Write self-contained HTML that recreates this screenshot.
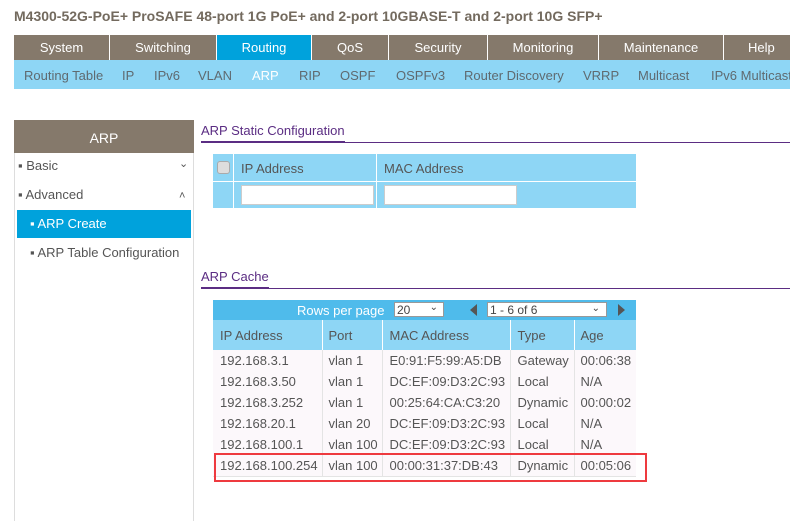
<!DOCTYPE html>
<html style="overflow:hidden"><head><style>
*{margin:0;padding:0;box-sizing:border-box}
body{width:790px;height:521px;overflow:hidden;background:#fff;font-family:"Liberation Sans",sans-serif;color:#555;position:relative}
.abs{position:absolute}
h1{position:absolute;left:14px;top:8px;font-size:14px;font-weight:bold;color:#736a5e;white-space:nowrap}
.nav{position:absolute;top:35px;height:25px;background:#85796b;color:#fff;font-size:13px;text-align:center;line-height:25px;border-right:1px solid #fff}
.sub{position:absolute;top:60px;left:14px;width:776px;height:29px;background:#8ed6f5;font-size:13px;line-height:31px;color:#5f6a70;white-space:nowrap;overflow:hidden}
.sub span{position:absolute}
.lp{position:absolute;left:14px;top:120px;width:180px;height:402px;border:1px solid #ddd;border-top:none;border-bottom:none}
.lph{position:absolute;left:14px;top:120px;width:180px;height:33px;background:#85796b;color:#fff;font-size:14px;text-align:center;line-height:36px}
.mi{position:absolute;font-size:13px;color:#555;white-space:nowrap}
.title{position:absolute;font-size:13px;color:#5b2d83}
table{border-collapse:collapse;position:absolute;font-size:13px}
td{white-space:nowrap}
</style></head><body>
<h1>M4300-52G-PoE+ ProSAFE 48-port 1G PoE+ and 2-port 10GBASE-T and 2-port 10G SFP+</h1>
<div class="nav" style="left:14px;width:96px">System</div>
<div class="nav" style="left:110px;width:107px">Switching</div>
<div class="nav" style="left:217px;width:95px;background:#00a2dc">Routing</div>
<div class="nav" style="left:312px;width:77px">QoS</div>
<div class="nav" style="left:389px;width:99px">Security</div>
<div class="nav" style="left:488px;width:111px">Monitoring</div>
<div class="nav" style="left:599px;width:125px">Maintenance</div>
<div class="nav" style="left:724px;width:66px;border:none;text-align:left;padding-left:24px">Help</div>
<div class="sub">
<span style="left:10px">Routing Table</span><span style="left:108px">IP</span><span style="left:140px">IPv6</span><span style="left:184px">VLAN</span><span style="left:238px;color:#fff">ARP</span><span style="left:285px">RIP</span><span style="left:326px">OSPF</span><span style="left:382px">OSPFv3</span><span style="left:450px">Router Discovery</span><span style="left:569px">VRRP</span><span style="left:624px">Multicast</span><span style="left:697px">IPv6 Multicast</span>
</div>
<div class="lp"></div>
<div class="lph">ARP</div>
<div class="mi" style="left:18px;top:158px">▪ Basic</div><div class="mi" style="left:179px;top:157px;font-size:11px">⌄</div>
<div class="mi" style="left:18px;top:187px">▪ Advanced</div><div class="mi" style="left:179px;top:190px;font-size:11px">˄</div>
<div class="abs" style="left:17px;top:210px;width:174px;height:28px;background:#00a2dc"></div>
<div class="mi" style="left:30px;top:216px;color:#fff">▪ ARP Create</div>
<div class="mi" style="left:30px;top:245px">▪ ARP Table Configuration</div>

<div class="title" style="left:201px;top:123px">ARP Static Configuration</div>
<div class="abs" style="left:201px;top:142px;width:589px;height:1px;background:#5b2d83"></div>
<div class="abs" style="left:201px;top:141px;width:144px;height:2px;background:#5b2d83"></div>
<div class="abs" style="left:213px;top:154px;width:423px;height:54px;background:#8ed6f5"></div>
<div class="abs" style="left:233px;top:154px;width:1px;height:54px;background:#fff"></div>
<div class="abs" style="left:376px;top:154px;width:1px;height:54px;background:#fff"></div>
<div class="abs" style="left:213px;top:181px;width:423px;height:1px;background:#fff"></div>
<div class="abs" style="left:217px;top:161px;width:13px;height:13px;background:#ddd;border:1px solid #aaa;border-radius:3px"></div>
<div class="mi" style="left:241px;top:161px">IP Address</div>
<div class="mi" style="left:384px;top:161px">MAC Address</div>
<div class="abs" style="left:241px;top:185px;width:133px;height:20px;background:#fff;border:1px solid #ccc"></div>
<div class="abs" style="left:384px;top:185px;width:133px;height:20px;background:#fff;border:1px solid #ccc"></div>

<div class="title" style="left:201px;top:269px">ARP Cache</div>
<div class="abs" style="left:201px;top:288px;width:589px;height:1px;background:#5b2d83"></div>
<div class="abs" style="left:201px;top:287px;width:68px;height:2px;background:#5b2d83"></div>
<div class="abs" style="left:213px;top:300px;width:423px;height:20px;background:#4fbbeb"></div>
<div class="mi" style="left:297px;top:303px;color:#fff">Rows per page</div>
<div class="abs" style="left:394px;top:302px;width:50px;height:15px;background:#fff;border:1px solid #999;font-size:12px;line-height:14px;padding-left:2px;color:#444">20<span style="position:absolute;right:5px;top:-2px;font-size:10px">⌄</span></div>
<div class="abs" style="left:470px;top:304px;width:0;height:0;border-top:6px solid transparent;border-bottom:6px solid transparent;border-right:7px solid #555"></div>
<div class="abs" style="left:487px;top:302px;width:120px;height:15px;background:#fff;border:1px solid #999;font-size:12px;line-height:15px;padding-left:2px;color:#444">1 - 6 of 6<span style="position:absolute;right:6px;top:-2px;font-size:10px">⌄</span></div>
<div class="abs" style="left:618px;top:304px;width:0;height:0;border-top:6px solid transparent;border-bottom:6px solid transparent;border-left:7px solid #555"></div>
<table style="left:213px;top:320px;width:423px">
<tr style="background:#8ed6f5;height:30px"><td style="width:109px;padding-left:7px;border-right:1px solid #fff">IP Address</td><td style="width:60px;padding-left:6px;border-right:1px solid #fff">Port</td><td style="width:128px;padding-left:7px;border-right:1px solid #fff">MAC Address</td><td style="width:64px;padding-left:7px;border-right:1px solid #fff">Type</td><td style="padding-left:6px">Age</td></tr>
<tr style="height:21px;background:#fcf8fb"><td style="padding-left:7px;border-right:1px solid #e4e4e4">192.168.3.1</td><td style="padding-left:6px;border-right:1px solid #e4e4e4">vlan 1</td><td style="padding-left:7px;border-right:1px solid #e4e4e4">E0:91:F5:99:A5:DB</td><td style="padding-left:7px;border-right:1px solid #e4e4e4">Gateway</td><td style="padding-left:6px">00:06:38</td></tr>
<tr style="height:21px;background:#fcf8fb"><td style="padding-left:7px;border-right:1px solid #e4e4e4">192.168.3.50</td><td style="padding-left:6px;border-right:1px solid #e4e4e4">vlan 1</td><td style="padding-left:7px;border-right:1px solid #e4e4e4">DC:EF:09:D3:2C:93</td><td style="padding-left:7px;border-right:1px solid #e4e4e4">Local</td><td style="padding-left:6px">N/A</td></tr>
<tr style="height:21px;background:#fcf8fb"><td style="padding-left:7px;border-right:1px solid #e4e4e4">192.168.3.252</td><td style="padding-left:6px;border-right:1px solid #e4e4e4">vlan 1</td><td style="padding-left:7px;border-right:1px solid #e4e4e4">00:25:64:CA:C3:20</td><td style="padding-left:7px;border-right:1px solid #e4e4e4">Dynamic</td><td style="padding-left:6px">00:00:02</td></tr>
<tr style="height:21px;background:#fcf8fb"><td style="padding-left:7px;border-right:1px solid #e4e4e4">192.168.20.1</td><td style="padding-left:6px;border-right:1px solid #e4e4e4">vlan 20</td><td style="padding-left:7px;border-right:1px solid #e4e4e4">DC:EF:09:D3:2C:93</td><td style="padding-left:7px;border-right:1px solid #e4e4e4">Local</td><td style="padding-left:6px">N/A</td></tr>
<tr style="height:21px;background:#fcf8fb"><td style="padding-left:7px;border-right:1px solid #e4e4e4">192.168.100.1</td><td style="padding-left:6px;border-right:1px solid #e4e4e4">vlan 100</td><td style="padding-left:7px;border-right:1px solid #e4e4e4">DC:EF:09:D3:2C:93</td><td style="padding-left:7px;border-right:1px solid #e4e4e4">Local</td><td style="padding-left:6px">N/A</td></tr>
<tr style="height:21px;background:#fcf8fb;border-bottom:1px solid #e4e4e4"><td style="padding-left:7px;border-right:1px solid #e4e4e4">192.168.100.254</td><td style="padding-left:6px;border-right:1px solid #e4e4e4">vlan 100</td><td style="padding-left:7px;border-right:1px solid #e4e4e4">00:00:31:37:DB:43</td><td style="padding-left:7px;border-right:1px solid #e4e4e4">Dynamic</td><td style="padding-left:6px">00:05:06</td></tr>
</table>
<div class="abs" style="left:214px;top:453px;width:433px;height:29px;border:2px solid #ee3a3f"></div>
</body></html>
